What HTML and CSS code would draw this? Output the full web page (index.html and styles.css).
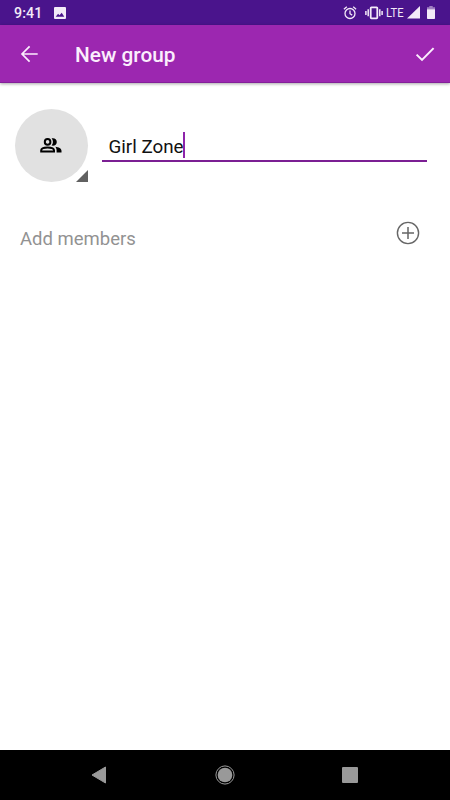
FILE: index.html
```html
<!DOCTYPE html>
<html lang="en">
<head>
<meta charset="utf-8">
<title>New group</title>
<link rel="stylesheet" href="styles.css">
</head>
<body>
<div class="screen">
  <div class="status">
    <span class="clock">9:41</span>
    <svg class="photo" width="12" height="12" viewBox="0 0 12 12"><path fill="currentColor" fill-rule="evenodd" d="M1 0h10a1 1 0 0 1 1 1v10a1 1 0 0 1-1 1H1a1 1 0 0 1-1-1V1a1 1 0 0 1 1-1zm.7 9.700h8.600L7.700 5.800 5.500 8.300 4.100 6.700z"/></svg>
    <span class="spacer"></span>
    <svg class="alarm" width="14" height="14" viewBox="0 0 14 14" fill="none" stroke="currentColor" stroke-width="1.3"><circle cx="7" cy="7.500" r="5"/><path d="M.9 3.300 3.800.8M13.100 3.300 10.200.8M7 4.600v3.100l2.200 1.400"/></svg>
    <svg class="vibrate" width="18" height="14" viewBox="0 0 18 14" fill="none" stroke="currentColor" stroke-width="1.500"><rect x="5.700" y="1.300" width="6.600" height="11" rx=".7" stroke-width="1.800"/><path d="M3.200 3.300v7M14.800 3.300v7M.9 5v4M17.100 5v4"/></svg>
    <span class="lte">LTE</span>
    <svg class="signal" width="13" height="13" viewBox="0 0 13 13"><path fill="currentColor" d="M13 0v12.600H0z"/></svg>
    <svg class="battery" width="8" height="13" viewBox="0 0 8 13"><path fill="currentColor" opacity=".5" d="M2.300 0h3.400v1.300H8V3.500H0V1.300h2.300z"/><path fill="currentColor" d="M0 3.300h8v8.900q0 .8-.8.8H.8q-.8 0-.8-.8z"/></svg>
  </div>
  <header class="appbar">
    <svg class="back" width="18" height="18" viewBox="0 0 18 18" fill="none" stroke="currentColor" stroke-width="1.700"><path d="M17.700 9H2.200M9.600 1.300 2 9l7.600 7.700"/></svg>
    <h1 class="title">New group</h1>
    <svg class="check" width="20" height="16" viewBox="0 0 20 16" fill="none" stroke="currentColor" stroke-width="2"><path d="M1.600 8.600 7 13.900 18.600 2.100"/></svg>
  </header>
  <main class="content">
    <div class="group">
      <div class="avatar">
        <svg width="22" height="15" viewBox="0 0 22 15"><g fill="none" stroke="#000" stroke-width="2"><circle cx="7.600" cy="3.900" r="2.800"/><path d="M1.200 13.500v-1.200C1.200 10.500 4.500 9.500 7.600 9.500s6.400 1 6.400 2.800v1.200z"/></g><path d="M11.600.3c2.900-.7 5.200 1 5.200 3.600s-2.300 4.300-5.200 3.600c1.800-2.200 1.800-5 0-7.200zM15.300 8.700c3.400.4 6.200 1.700 6.200 4.100v1.700h-4.900v-2c0-1.600-.5-2.900-1.300-3.800z"/></svg>
        <svg class="corner" width="12" height="12" viewBox="0 0 12 12"><path fill="#616161" d="M12 0v12H0z"/></svg>
      </div>
      <div class="field"><span>Girl Zone</span><i class="caret"></i></div>
    </div>
    <div class="members">
      <span>Add members</span>
      <svg width="24" height="24" viewBox="0 0 24 24" fill="none" stroke="#666"><circle cx="12" cy="12" r="10.600" stroke-width="1.400"/><path stroke-width="1.500" d="M12 6v12M6 12h12"/></svg>
    </div>
  </main>
  <nav class="navbar">
    <svg width="16" height="18" viewBox="0 0 16 18"><path fill="#999" stroke="#999" stroke-linejoin="round" d="M14.500 1v16L1 9z"/></svg>
    <svg width="20" height="20" viewBox="0 0 20 20"><circle cx="10" cy="10" r="7.300" fill="#999"/><circle cx="10" cy="10" r="9.100" fill="none" stroke="#999"/></svg>
    <svg width="16" height="16" viewBox="0 0 16 16"><rect width="16" height="16" rx="1" fill="#999"/></svg>
  </nav>
</div>
</body>
</html>
```

FILE: styles.css
```css
* { box-sizing: border-box; }
body { margin: 0; font-family: Roboto, "Liberation Sans", sans-serif; background: #fff; }
svg { display: block; flex: none; }
.screen { width: 450px; height: 800px; display: flex; flex-direction: column; overflow: hidden; }
.status { height: 25px; flex: none; display: flex; align-items: center; background: #4a148c; color: #f3eaf8; padding: 0 15px 0 14px; }
.clock { width: 40px; padding-top: 2px; font-size: 14.2px; line-height: 23px; font-weight: 500; letter-spacing: .1px; }
.spacer { flex: 1; }
.alarm { margin-right: 8px; }
.vibrate { margin-right: 3px; }
.lte { width: 21px; font-size: 13.5px; line-height: 25px; white-space: nowrap; transform: scaleX(.83); transform-origin: left; }
.signal { margin-right: 7px; }
.appbar { height: 58px; flex: none; display: flex; align-items: center; padding: 0 15px 0 20px; background: #9c27b0; color: #fbeefd; border-bottom: 1px solid #84209a; box-shadow: 0 1px 3px rgba(0, 0, 0, .35); }
.title { flex: 1; margin: 2px 0 0 37px; font-size: 20.8px; line-height: 28px; font-weight: 500; }
.content { flex: 1; padding: 26px 23px 0 14.5px; }
.group { display: flex; align-items: flex-start; }
.avatar { position: relative; width: 73px; height: 73px; flex: none; border-radius: 50%; background: #e1e1e1; display: flex; align-items: center; justify-content: center; }
.corner { position: absolute; right: 0; bottom: 0; }
.field { flex: 1; display: flex; align-items: flex-end; height: 52.5px; margin-left: 14.5px; padding: 0 0 2px 6.5px; border-bottom: 2px solid #7b1f93; font-size: 18.8px; line-height: 22px; color: #111; }
.caret { width: 2px; height: 26px; margin-left: -.5px; background: #8e24aa; }
.members { display: flex; align-items: center; justify-content: space-between; height: 30px; margin: 36px 7px 0 5.5px; font-size: 18.5px; color: #929292; }
.members span { margin-top: 11px; }
.navbar { height: 50px; flex: none; display: flex; align-items: center; justify-content: space-between; padding: 0 92px 0 91px; background: #000; }
```
